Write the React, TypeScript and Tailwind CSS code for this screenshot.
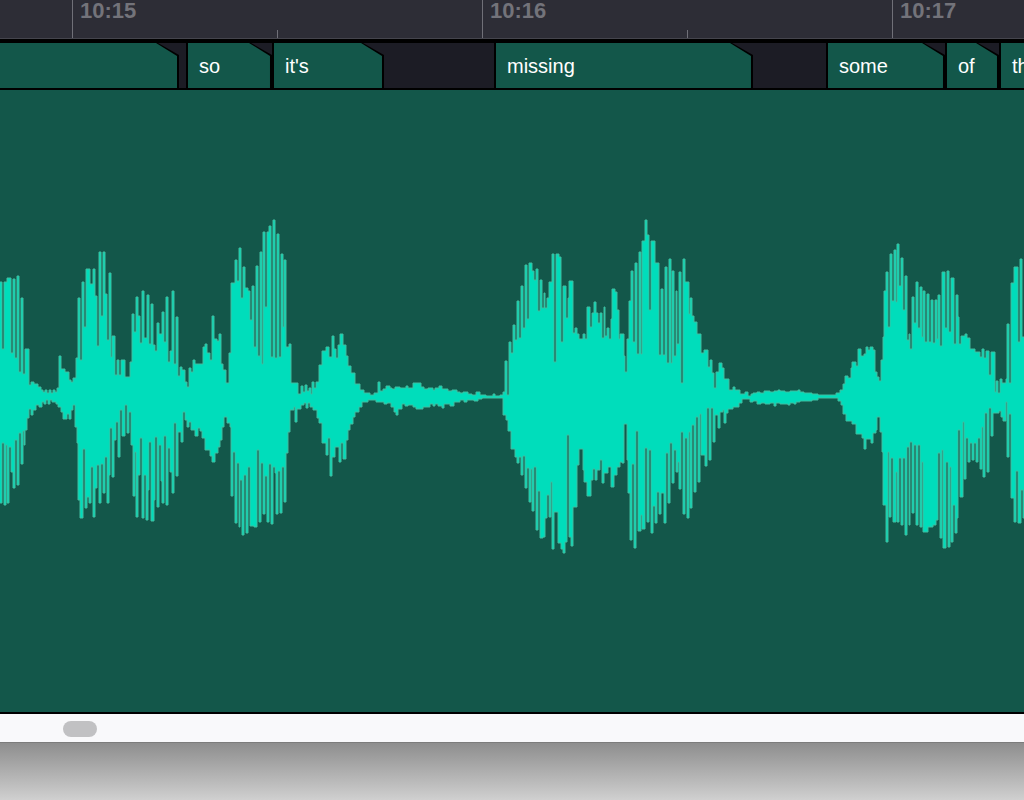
import { useState } from "react";

// visible part of the timeline, in timeline units
const VIEW_WIDTH = 1024;

const ticks = [
  { id: "lead", width: 72, label: "", tick: "none" },
  { id: "15", width: 205, label: "10:15", tick: "full" },
  { id: "15h", width: 205, label: "", tick: "half" },
  { id: "16", width: 205, label: "10:16", tick: "full" },
  { id: "16h", width: 205, label: "", tick: "half" },
  { id: "17", width: 132, label: "10:17", tick: "full" },
];

const words = [
  { text: "", start: -2, end: 179 },
  { text: "so", start: 186, end: 272 },
  { text: "it's", start: 272, end: 384 },
  { text: "missing", start: 494, end: 753 },
  { text: "some", start: 826, end: 945 },
  { text: "of", start: 945, end: 999 },
  { text: "the", start: 999, end: 1060 },
];

// stepped envelope: "x,y" holds the level y from x up to the next entry
const upper = `
0,282 2,349 4,282 7,278 11,353 13,279 15,358 17,276 19,372 21,298 23,374 25,349 29,385 31,382
34,384 38,387 41,390 43,392 45,390 47,393 49,390 51,393 53,390 55,392 57,388 59,356 61,369
65,372 69,380 71,382 73,378 76,358 78,298 80,360 82,282 84,327 86,269 90,284 93,269 95,296
97,346 99,252 101,316 103,252 105,294 107,340 109,273 111,357 112,336 115,375 117,360 119,375
121,360 125,377 130,362 132,314 134,332 136,297 138,316 140,343 142,291 144,338 147,295
149,344 151,304 153,345 155,351 157,323 159,334 162,312 164,342 166,297 168,362 170,351
172,291 174,364 176,317 178,376 180,367 182,370 185,382 187,387 189,368 191,372 193,360
195,364 200,364 203,347 205,344 207,353 210,360 212,316 214,339 217,341 219,334 221,364
223,370 226,383 229,353 231,283 235,260 237,281 239,248 241,298 243,267 245,288 248,291
250,320 252,286 254,347 256,266 258,356 260,252 262,364 263,232 265,307 267,232 269,226
271,357 273,220 275,358 277,234 279,357 281,254 283,327 284,260 286,347 289,344 291,383
298,394 301,386 303,392 305,385 307,391 309,388 311,394 312,382 314,388 316,382 319,365
322,351 326,347 329,357 332,336 334,349 336,358 338,345 340,334 343,345 346,356 348,366
351,373 355,384 360,390 364,393 370,395 374,393 378,382 380,391 383,389 386,386 390,388
392,389 395,387 400,388 406,386 408,388 413,383 421,387 424,389 428,388 433,390 435,388
439,386 442,389 448,391 452,390 457,392 460,393 463,392 468,394 472,395 476,392 480,395
486,396 493,394 495,396 500,395 503,392 505,361 507,395 509,342 511,353 513,325 515,340
517,301 519,338 521,286 523,328 525,265 527,319 529,263 532,271 534,280 536,269 538,311
540,280 542,308 544,293 545,308 547,298 549,282 552,254 554,362 556,254 559,257 561,342
563,286 566,318 568,298 569,281 573,333 575,328 577,334 579,339 583,334 585,339 587,307
590,327 592,313 594,302 596,313 598,323 600,313 602,338 604,307 605,336 607,328 609,339
611,319 612,289 615,292 617,310 619,339 620,334 624,356 625,372 627,339 629,301 631,271
633,342 635,263 637,354 639,252 641,354 642,241 645,220 647,235 649,310 651,241 655,263
659,355 661,289 663,355 665,267 667,363 669,259 671,363 672,271 674,356 676,291 677,344
679,272 681,383 683,259 685,282 689,314 690,298 692,316 694,322 697,334 701,353 704,350
708,367 710,360 712,373 714,388 716,372 719,363 722,368 724,379 729,390 733,387 735,390
740,394 745,392 748,396 751,394 753,393 757,392 760,393 764,391 770,392 774,391 778,390
780,391 785,392 790,391 798,390 800,392 804,393 812,394 818,395 836,393 840,390 843,384
845,376 848,378 851,368 852,362 856,366 858,349 861,356 864,354 866,347 868,350 870,347
873,350 875,372 877,377 879,381 881,360 883,337 884,291 886,272 888,327 890,254 892,301
894,250 896,302 897,244 899,286 901,258 903,310 905,276 907,340 909,334 910,349 912,297
914,323 916,282 918,328 920,287 922,337 923,291 925,342 927,294 929,342 931,300 933,343
935,300 937,339 938,295 940,346 942,272 945,328 947,271 949,332 951,278 954,344 956,295
958,317 959,344 961,336 965,334 967,338 970,349 975,352 980,357 982,349 984,358 986,351
989,375 991,352 995,392 996,381 998,393 1000,379 1002,383 1006,379 1007,324 1009,383
1011,283 1014,267 1018,342 1020,259 1022,337`;

const lower = `
0,503 2,443 4,505 6,445 7,503 9,447 11,472 13,488 15,440 17,485 19,433 21,464 23,431 24,445
25,430 27,418 29,409 31,415 33,410 36,405 39,407 42,402 44,404 46,400 48,404 50,400 52,402
56,404 58,407 61,412 63,419 67,414 69,419 71,410 73,405 75,427 77,443 78,500 80,518 83,449
85,508 87,497 89,503 91,467 93,517 95,488 97,465 99,503 101,464 103,493 105,457 107,503
109,475 110,428 112,477 114,440 116,422 118,457 120,410 122,436 125,405 127,433 129,412
131,445 133,496 135,452 136,517 138,475 140,438 142,518 144,475 146,520 148,490 149,442
151,521 154,500 155,437 157,507 159,445 161,481 162,503 164,436 166,505 168,448 170,472
172,493 174,423 176,476 178,432 181,442 183,412 185,420 187,427 189,422 191,430 195,436
198,428 200,431 202,438 205,450 210,456 212,462 215,453 218,447 220,440 222,427 224,417
227,423 230,427 231,496 233,452 235,523 237,463 239,527 240,480 242,535 244,475 246,533
248,467 250,526 254,527 257,450 259,522 261,463 263,514 265,476 267,522 269,464 271,524
273,467 275,473 276,514 278,471 280,513 282,467 284,502 286,453 288,432 290,410 294,407
295,422 297,409 301,405 304,403 306,408 308,403 310,407 313,410 317,418 319,423 322,443
326,455 328,438 330,476 332,457 335,447 339,462 341,443 343,459 346,440 348,430 350,424
353,417 355,412 359,407 362,402 368,400 376,402 384,404 387,403 391,407 394,412 396,415
398,409 402,404 405,406 408,405 413,407 416,409 423,407 430,404 433,406 435,404 438,406
442,408 444,404 450,406 454,402 460,400 464,402 467,400 474,401 478,399 482,398 503,415
506,420 508,431 511,449 515,457 517,463 519,457 521,475 523,456 525,488 527,468 529,502
531,469 532,511 534,467 536,530 538,491 540,538 543,537 545,518 547,495 549,517 551,482
552,549 554,512 558,543 561,549 563,553 565,542 567,435 569,537 571,546 573,507 577,465
579,449 583,470 584,482 587,496 591,480 593,469 595,480 597,470 600,460 602,483 604,473
608,467 611,487 614,475 617,467 620,462 622,463 624,424 627,460 628,493 630,540 632,464
634,548 636,431 638,531 641,515 642,529 645,448 647,522 649,450 651,533 653,506 655,523
657,492 659,514 661,493 664,523 666,453 668,503 670,443 672,483 674,450 676,472 678,462
679,489 681,432 683,514 685,438 687,518 689,432 690,508 692,425 694,492 696,417 698,482
700,414 701,455 705,466 707,408 709,460 711,408 713,442 715,415 718,428 720,412 723,410
724,423 726,413 728,409 733,407 739,403 742,399 750,402 753,401 757,404 761,403 765,404
770,403 774,406 776,403 780,404 788,405 790,403 794,404 796,402 800,401 812,400 818,398
838,401 841,405 843,414 846,421 852,424 856,434 862,438 864,449 866,439 871,443 873,433
876,430 877,417 880,432 882,452 883,505 886,542 888,452 889,517 891,458 893,522 896,472
897,522 899,458 901,525 903,458 905,535 907,447 909,525 910,442 912,513 914,445 916,525
918,445 920,527 922,462 923,532 928,527 933,525 936,520 938,453 940,538 942,450 943,548
946,462 948,547 950,467 951,542 953,505 955,533 957,518 958,430 960,497 963,422 964,479
966,438 968,462 970,443 972,460 974,443 976,462 978,438 980,469 982,427 983,477 985,413
987,472 989,408 991,436 993,413 999,411 1001,417 1003,421 1006,402 1007,457 1009,414
1011,498 1014,522 1016,471 1018,523 1021,490 1023,518`;

function parse(levels: string) {
  return levels
    .trim()
    .split(/\s+/)
    .map((pair) => pair.split(",").map(Number));
}

function buildWavePath() {
  const top = parse(upper);
  const bottom = parse(lower);
  let d = `M-4 ${top[0][1]}`;
  top.forEach(([x, y]) => {
    d += `H${x}V${y}`;
  });
  d += `H1028V${bottom[bottom.length - 1][1]}`;
  for (let i = bottom.length - 1; i > 0; i--) {
    d += `H${bottom[i][0]}V${bottom[i - 1][1]}`;
  }
  return d + "H-4Z";
}

const wavePath = buildWavePath();

const percent = (value: number) => `${(value / VIEW_WIDTH) * 100}%`;

function Ruler() {
  return (
    <header className="flex h-10 shrink-0 border-b border-black bg-[#2d2d36]">
      {ticks.map((t) => (
        <div
          key={t.id}
          className="flex shrink-0 items-end border-b border-[#45454d]"
          style={{ width: percent(t.width) }}
        >
          {t.tick === "full" && (
            <div className="h-full border-l border-[#707078] pl-[7px]">
              <span className="block text-[22px] leading-[22px] font-bold text-[#73737a]">
                {t.label}
              </span>
            </div>
          )}
          {t.tick === "half" && <div className="h-2 border-l border-[#707078]" />}
        </div>
      ))}
    </header>
  );
}

function WordTrack() {
  return (
    <div className="flex h-[50px] shrink-0 overflow-hidden border-t-3 border-b-2 border-black bg-[#1c1c25]">
      {words.map((word, i) => {
        const previousEnd = i === 0 ? 0 : words[i - 1].end;
        return (
          <div
            key={word.start}
            className="h-full shrink-0 bg-black px-[2px] [clip-path:polygon(0_0,calc(100%_-_21px)_0,100%_12px,100%_100%,0_100%)]"
            style={{
              width: percent(word.end - word.start),
              marginLeft: percent(word.start - previousEnd),
            }}
          >
            <div className="h-full bg-[#13574a] pl-[11px] text-xl leading-[46px] whitespace-nowrap text-white [clip-path:polygon(0_0,calc(100%_-_21px)_0,100%_13px,100%_100%,0_100%)]">
              {word.text}
            </div>
          </div>
        );
      })}
    </div>
  );
}

function Waveform() {
  return (
    <svg
      className="min-h-0 w-full flex-1 bg-[#13574a]"
      viewBox="0 90 1024 622"
      preserveAspectRatio="none"
      role="img"
      aria-label="Waveform"
    >
      <path
        d={wavePath}
        fill="#00ddbb"
        stroke="#40bd9f"
        strokeWidth="1"
        vectorEffect="non-scaling-stroke"
      />
    </svg>
  );
}

export default function App() {
  const [scroll, setScroll] = useState(64);

  return (
    <main className="flex h-screen flex-col overflow-hidden bg-[#13574a] font-['Liberation_Sans',Arial,sans-serif]">
      <Ruler />
      <WordTrack />
      <Waveform />
      <div className="flex h-[31px] shrink-0 items-center border-t-2 border-b border-t-black border-b-[#7c7c7c] bg-[#f9f9fb] pt-0.5">
        <input
          type="range"
          min={0}
          max={1000}
          value={scroll}
          onChange={(e) => setScroll(Number(e.target.value))}
          aria-label="Scroll timeline"
          className="m-0 h-4 w-full appearance-none bg-transparent outline-none [&::-webkit-slider-thumb]:h-4 [&::-webkit-slider-thumb]:w-[34px] [&::-webkit-slider-thumb]:appearance-none [&::-webkit-slider-thumb]:rounded-full [&::-webkit-slider-thumb]:bg-[#c1c1c3]"
        />
      </div>
      <div className="h-[57px] shrink-0 bg-linear-to-b from-[#8e8e8e] to-[#d0d0d0]" />
    </main>
  );
}
